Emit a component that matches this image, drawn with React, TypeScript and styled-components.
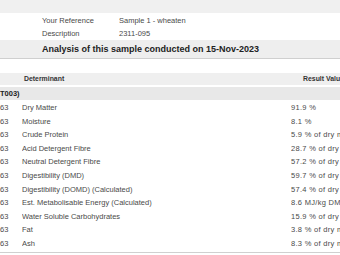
import React from "react";
import styled, { createGlobalStyle } from "styled-components";

const Global = createGlobalStyle`
  html, body { margin: 0; padding: 0; background: #ffffff; overflow: hidden; }
  body { font-family: "Liberation Sans", Arial, sans-serif; color: #4a4a4a; }
`;

const Page = styled.div`
  width: 340px;
  height: 255px;
  overflow: hidden;
  display: flex;
  flex-direction: column;
`;

const TopBand = styled.div`
  height: 13px;
  flex: none;
  background: #f0f0f0;
`;

const InfoGrid = styled.div`
  display: grid;
  grid-template-columns: 77px auto;
  grid-auto-rows: 13px;
  padding: 1px 0 0 42px;
  font-size: 7.5px;
  line-height: 13px;
  height: 26px;
  flex: none;
`;

const InfoCell = styled.div`
  color: #4a4a4a;
  white-space: nowrap;
`;

const AnalysisBar = styled.div`
  height: 18px;
  flex: none;
  background: #eeeeee;
  border-bottom: 1px solid #cfcfcf;
  padding-left: 42px;
  font-size: 9px;
  font-weight: bold;
  line-height: 19px;
  color: #222;
  white-space: nowrap;
`;

const Spacer = styled.div<{ $h: number }>`
  height: ${(p) => p.$h}px;
  flex: none;
`;

const HeaderRow = styled.div`
  height: 12px;
  flex: none;
  background: #efefef;
  display: grid;
  grid-template-columns: 303px auto;
  font-size: 6.9px;
  font-weight: bold;
  line-height: 12px;
  color: #333;
  white-space: nowrap;
`;

const HeaderCell = styled.div<{ $pad?: number }>`
  padding-left: ${(p) => p.$pad ?? 0}px;
`;

const SectionRow = styled.div`
  height: 13px;
  flex: none;
  background: #e8e8e8;
  font-size: 7.5px;
  font-weight: bold;
  line-height: 13px;
  color: #222;
  white-space: nowrap;
`;

const Rows = styled.div`
  display: flex;
  flex-direction: column;
  flex: none;
  padding-top: 1px;
  border-bottom: 1px solid #d0d0d0;
  padding-bottom: 1px;
`;

const Row = styled.div`
  display: grid;
  grid-template-columns: 22px 269px auto;
  height: 13.6px;
  line-height: 13.6px;
  font-size: 7.5px;
  color: #4a4a4a;
  white-space: nowrap;
`;

const Cell = styled.div<{ $spaced?: boolean }>`
  overflow: hidden;
  letter-spacing: ${(p) => (p.$spaced ? "0.3px" : "normal")};
`;

const data: [string, string][] = [
  ["Dry Matter", "91.9 %"],
  ["Moisture", "8.1 %"],
  ["Crude Protein", "5.9 % of dry matter"],
  ["Acid Detergent Fibre", "28.7 % of dry matter"],
  ["Neutral Detergent Fibre", "57.2 % of dry matter"],
  ["Digestibility (DMD)", "59.7 % of dry matter"],
  ["Digestibility (DOMD) (Calculated)", "57.4 % of dry matter"],
  ["Est. Metabolisable Energy (Calculated)", "8.6 MJ/kg DM"],
  ["Water Soluble Carbohydrates", "15.9 % of dry matter"],
  ["Fat", "3.8 % of dry matter"],
  ["Ash", "8.3 % of dry matter"],
];

export default function App() {
  return (
    <Page>
      <Global />
      <TopBand />
      <InfoGrid>
        <InfoCell>Your Reference</InfoCell>
        <InfoCell>Sample 1 - wheaten</InfoCell>
        <InfoCell>Description</InfoCell>
        <InfoCell>2311-095</InfoCell>
      </InfoGrid>
      <AnalysisBar>Analysis of this sample conducted on 15-Nov-2023</AnalysisBar>
      <Spacer $h={14} />
      <HeaderRow>
        <HeaderCell $pad={24}>Determinant</HeaderCell>
        <HeaderCell>Result Value</HeaderCell>
      </HeaderRow>
      <Spacer $h={2} />
      <SectionRow>T003)</SectionRow>
      <Rows>
        {data.map(([name, value]) => (
          <Row key={name}>
            <Cell>63</Cell>
            <Cell>{name}</Cell>
            <Cell $spaced>{value}</Cell>
          </Row>
        ))}
      </Rows>
    </Page>
  );
}
